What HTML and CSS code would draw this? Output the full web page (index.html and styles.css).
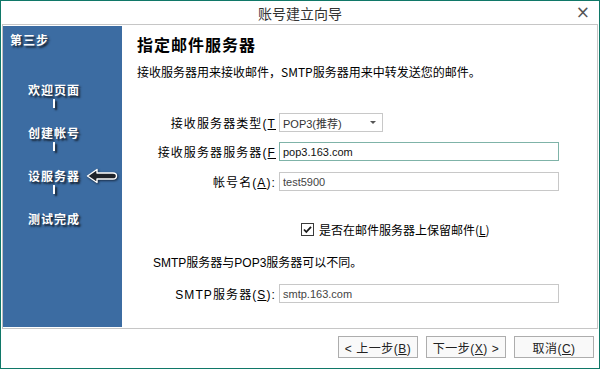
FILE: index.html
```html
<!DOCTYPE html>
<html lang="zh-CN">
<head>
<meta charset="utf-8">
<title>账号建立向导</title>
<link rel="stylesheet" href="styles.css">
</head>
<body>
<div class="window">
  <div class="titlebar">
    <span class="title">账号建立向导</span>
    <span class="close">×</span>
  </div>
  <div class="panel">
    <aside class="sidebar">
      <div class="step">第三步</div>
      <ul class="steps">
        <li class="item">欢迎页面</li>
        <li class="bar"></li>
        <li class="item">创建帐号</li>
        <li class="bar"></li>
        <li class="item current">设服务器
          <svg class="arrow" width="32" height="16" viewBox="0 0 32 16">
            <path d="M1.5 8 L11 1.5 L11 5 L27 5 Q30.5 5 30.5 8 Q30.5 11 27 11 L11 11 L11 14.5 Z" fill="#1f232a" stroke="#ffffff" stroke-width="1.4" stroke-linejoin="round"/>
          </svg>
        </li>
        <li class="bar"></li>
        <li class="item">测试完成</li>
      </ul>
    </aside>
    <main class="content">
      <h1 class="heading">指定邮件服务器</h1>
      <p class="desc">接收服务器用来接收邮件，SMTP服务器用来中转发送您的邮件。</p>
      <div class="form">
        <div class="row">
          <label class="label">接收服务器类型(<u>T</u></label>
          <div class="select"><span>POP3(推荐)</span><span class="caret"></span></div>
        </div>
        <div class="row row2">
          <label class="label">接收服务器服务器(<u>F</u></label>
          <div class="input focused">pop3.163.com</div>
        </div>
        <div class="row row3">
          <label class="label">帐号名(<u>A</u>):</label>
          <div class="input muted">test5900</div>
        </div>
      </div>
      <div class="check-row">
        <svg class="checkbox" width="13" height="13" viewBox="0 0 13 13">
          <rect x="0.5" y="0.5" width="12" height="12" fill="#fff" stroke="#3a3a3a"/>
          <path d="M3 6.5 L5.3 9 L10 3.8" fill="none" stroke="#1a1a1a" stroke-width="1.8"/>
        </svg>
        <span>是否在邮件服务器上保留邮件(<u>L</u>)</span>
      </div>
      <p class="note">SMTP服务器与POP3服务器可以不同。</p>
      <div class="row smtp">
        <label class="label">SMTP服务器(<u>S</u>):</label>
        <div class="input muted">smtp.163.com</div>
      </div>
    </main>
  </div>
  <div class="footer">
    <button class="btn">&lt; 上一步(<u>B</u>)</button>
    <button class="btn">下一步(<u>X</u>) &gt;</button>
    <button class="btn">取消(<u>C</u>)</button>
  </div>
</div>
</body>
</html>
```

FILE: styles.css
```css
* { box-sizing: border-box; }
html, body { margin: 0; padding: 0; background: #fff; }
body {
  font-family: "Liberation Sans", "Noto Sans CJK SC", sans-serif;
  font-size: 12px;
  color: #000;
}
.window {
  width: 600px;
  height: 369px;
  border: 1px solid #107868;
  display: flex;
  flex-direction: column;
  background: #fff;
}
.titlebar {
  height: 23px;
  position: relative;
  display: flex;
  align-items: center;
  justify-content: center;
}
.title {
  font-family: "Noto Sans CJK SC", sans-serif;
  font-size: 14px;
  color: #333;
  line-height: 16px;
  margin-top: 1px;
}
.close {
  position: absolute;
  right: 9px;
  top: 3px;
  font-size: 17px;
  line-height: 17px;
  color: #555;
  font-family: "DejaVu Sans", sans-serif;
}
.panel {
  margin: 0 1px;
  height: 305px;
  border: 1px solid #c6c6c6;
  border-left-color: #c0c0c0;
  padding: 1px 0 1px 0;
  display: flex;
}
.sidebar {
  width: 119px;
  background: #3c6ca2;
  color: #fff;
  padding: 6px 0 0 7px;
  font-family: "Noto Sans CJK SC", sans-serif;
  font-weight: bold;
  text-shadow: 2px 2px 2px #15202e;
}
.step {
  line-height: 16px;
  font-size: 12px;
  letter-spacing: 1px;
}
.steps {
  list-style: none;
  margin: 34px 0 0 18px;
  padding: 0;
}
.item {
  height: 16px;
  line-height: 16px;
  font-size: 12px;
  letter-spacing: 1px;
  display: flex;
  align-items: center;
  gap: 6px;
}
.arrow {
  filter: drop-shadow(1px 1px 1px rgba(10, 20, 35, 0.8));
}
.bar {
  width: 2px;
  height: 9px;
  margin: 1px 0 17px 25px;
  background: #fff;
  box-shadow: 2px 2px 2px #15202e;
}
.content {
  flex: 1;
  padding: 8px 0 0 15px;
}
.heading {
  margin: 0;
  font-family: "Noto Sans CJK SC", sans-serif;
  font-size: 16px;
  font-weight: bold;
  line-height: 20px;
  letter-spacing: 1px;
}
.desc {
  margin: 10px 0 0 0;
  font-family: "Noto Sans CJK SC", sans-serif;
  font-size: 12px;
  line-height: 16px;
}
.form {
  margin-top: 33px;
}
.row {
  display: flex;
  align-items: center;
  height: 19px;
}
.row2 { margin-top: 10px; }
.row3 { margin-top: 11px; }
.label {
  width: 142px;
  text-align: right;
  padding-right: 3px;
  font-family: "Liberation Sans", "Noto Sans CJK SC", sans-serif;
  font-size: 12px;
  letter-spacing: 1.1px;
  white-space: nowrap;
  overflow: hidden;
}
.select {
  width: 104px;
  height: 19px;
  border: 1px solid #c8c8c8;
  display: flex;
  align-items: center;
  justify-content: space-between;
  padding: 0 6px 0 3px;
  font-size: 11px;
  color: #333;
}
.caret {
  width: 0;
  height: 0;
  border-left: 3px solid transparent;
  border-right: 3px solid transparent;
  border-top: 3px solid #555;
}
.input {
  width: 280px;
  height: 19px;
  border: 1px solid #c8c8c8;
  padding: 0 3px;
  display: flex;
  align-items: center;
  font-size: 11px;
  color: #111;
}
.input.focused { border-color: #7fb3a8; }
.input.muted { color: #444; }
.check-row {
  margin: 30px 0 0 164px;
  display: flex;
  align-items: center;
  gap: 5px;
  height: 16px;
  font-family: "Noto Sans CJK SC", sans-serif;
  font-size: 12px;
}
.note {
  margin: 18px 0 0 16px;
  line-height: 16px;
  font-size: 12px;
}
.smtp { margin-top: 13px; }
.footer {
  flex: 1;
  display: flex;
  justify-content: flex-end;
  align-items: flex-start;
  gap: 8px;
  padding: 7px 5px 0 0;
}
.btn {
  width: 80px;
  height: 22px;
  border: 1px solid #adadad;
  background: #f9f9f9;
  font-family: "Liberation Sans", "Noto Sans CJK SC", sans-serif;
  font-size: 12px;
  color: #222;
  padding: 0;
  letter-spacing: 0.5px;
}
```
